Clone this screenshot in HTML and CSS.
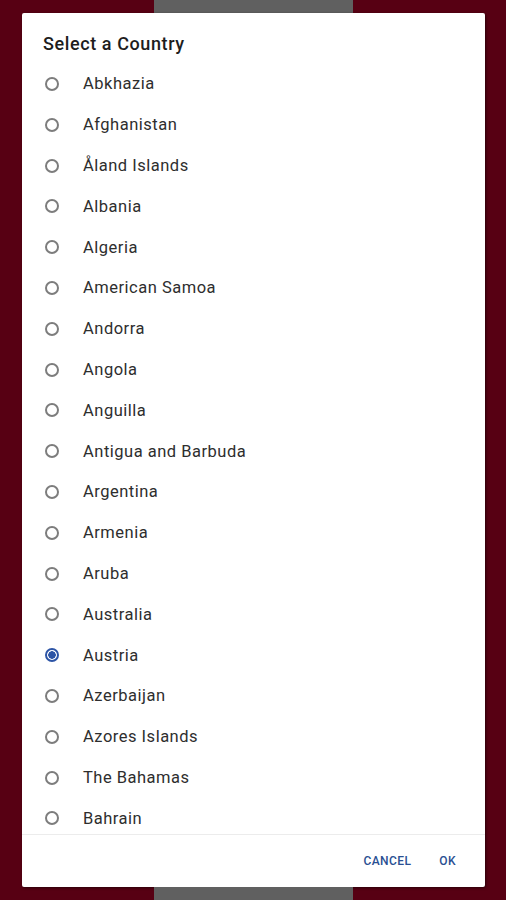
FILE: index.html
```html
<!DOCTYPE html>
<html lang="en">
<head>
    <meta charset="UTF-8">
    <meta name="viewport" content="width=device-width, initial-scale=1.0">
    <title>Select a Country</title>
    <link rel="stylesheet" href="styles.css">
</head>
<body>
    <div class="screen">
        <div class="bar"></div>

        <div class="dialog">
            <h1 class="dialog-title">Select a Country</h1>

            <!-- Country list -->
            <ul class="country-list">
                <li class="country"><span class="radio"></span>Abkhazia</li>
                <li class="country"><span class="radio"></span>Afghanistan</li>
                <li class="country"><span class="radio"></span>Åland Islands</li>
                <li class="country"><span class="radio"></span>Albania</li>
                <li class="country"><span class="radio"></span>Algeria</li>
                <li class="country"><span class="radio"></span>American Samoa</li>
                <li class="country"><span class="radio"></span>Andorra</li>
                <li class="country"><span class="radio"></span>Angola</li>
                <li class="country"><span class="radio"></span>Anguilla</li>
                <li class="country"><span class="radio"></span>Antigua and Barbuda</li>
                <li class="country"><span class="radio"></span>Argentina</li>
                <li class="country"><span class="radio"></span>Armenia</li>
                <li class="country"><span class="radio"></span>Aruba</li>
                <li class="country"><span class="radio"></span>Australia</li>
                <li class="country selected"><span class="radio"></span>Austria</li>
                <li class="country"><span class="radio"></span>Azerbaijan</li>
                <li class="country"><span class="radio"></span>Azores Islands</li>
                <li class="country"><span class="radio"></span>The Bahamas</li>
                <li class="country"><span class="radio"></span>Bahrain</li>
            </ul>

            <div class="dialog-actions">
                <button class="action-btn">Cancel</button>
                <button class="action-btn">OK</button>
            </div>
        </div>

        <div class="bar"></div>
    </div>
</body>
</html>
```

FILE: styles.css
```css
* {
    margin: 0;
    padding: 0;
    box-sizing: border-box;
}

body {
    font-family: Roboto, "Noto Sans", sans-serif;
    background-color: #570013;
    color: #222;
}

.screen {
    height: 900px;
    display: flex;
    flex-direction: column;
    align-items: center;
}

.bar {
    width: 199px;
    height: 13px;
    flex: none;
    background-color: #606060;
}

.dialog {
    width: 463px;
    height: 874px;
    margin-left: 1px;
    display: flex;
    flex-direction: column;
    background-color: #fff;
    border-radius: 2px;
    box-shadow: 1px 1px 3px rgba(0, 0, 0, 0.5);
}

.dialog-title {
    padding: 19px 21px 0;
    height: 50.6px;
    font-size: 18px;
    line-height: 24px;
    font-weight: 500;
    letter-spacing: 0.6px;
    color: #1d1d1d;
}

.country-list {
    list-style: none;
    flex: 1;
    overflow: hidden;
    border-bottom: 1px solid #ececec;
}

.country {
    height: 40.8px;
    display: flex;
    align-items: center;
    padding-left: 23px;
    font-size: 16.5px;
    letter-spacing: 0.5px;
    color: #2e2e2e;
}

.radio {
    width: 14px;
    height: 14px;
    margin-right: 24px;
    border: 2px solid #7d7d7d;
    border-radius: 50%;
    flex: none;
}

.country.selected .radio {
    border-color: #2d55a6;
    background: radial-gradient(circle, #2d55a6 0 3.5px, transparent 4px);
}

.dialog-actions {
    height: 52px;
    flex: none;
    display: flex;
    justify-content: flex-end;
    align-items: center;
    padding-right: 21px;
    gap: 12px;
}

.action-btn {
    background: none;
    border: none;
    padding: 6px 8px;
    font-family: Roboto, sans-serif;
    font-size: 12px;
    font-weight: 500;
    letter-spacing: 0.4px;
    text-transform: uppercase;
    color: #2a4f92;
}
```
